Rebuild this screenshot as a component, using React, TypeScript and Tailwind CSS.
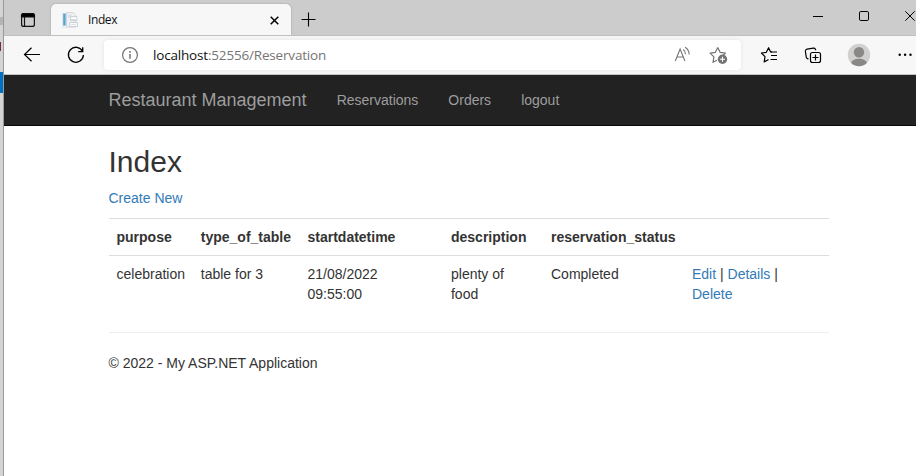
import type { ReactNode } from "react";

type IconProps = { box: string; className: string; children: ReactNode };

function Icon({ box, className, children }: IconProps) {
  return (
    <svg viewBox={box} fill="none" stroke="#111" strokeWidth="1.2" className={`shrink-0 ${className}`}>
      {children}
    </svg>
  );
}

function TabStrip() {
  return (
    <div className="flex h-9 border-b border-[#c0c0c0] bg-[#cccccc] overflow-hidden">
      <Icon box="4 0 47 36" className="h-9 w-[47px]">
        <rect x="21.6" y="13.6" width="12.8" height="12.8" rx="2" />
        <path d="M21.5 17v-1.5a2 2 0 0 1 2-2h9a2 2 0 0 1 2 2V17z" fill="#000" />
        <path d="M24.5 17v9" />
      </Icon>
      <div className="mt-1 flex h-8 w-60 shrink-0 items-center rounded-t-[5px] bg-[#f7f7f7] shadow-[0_0_2px_#999]">
        <Icon box="60 10 20 20" className="ml-[9px] h-5 w-5">
          <path d="M66.5 12.5h7l2 2V27h-9z" fill="#eef1f4" stroke="#d3d9df" strokeWidth="1" />
          <path d="M63 13.5h2.8v12H63z" fill="#5ba3cd" stroke="#a9cde3" strokeWidth=".7" />
          <path d="M62 27.2h14" stroke="#dde2e7" strokeWidth="1" />
          <path d="M68 14.5h4v3h-4z" fill="#dce2e8" stroke="none" />
          <path d="M70.5 16.5h6.500v4h-6.500zM69.5 22.500h8v4h-8z" fill="#fafafa" stroke="#c8ced4" strokeWidth=".9" />
          <path d="M71 19.500h5M71 24.500h5" stroke="#dde1e5" />
        </Icon>
        <span className="ml-2 w-[178px] font-['Open_Sans','Noto_Sans',sans-serif] text-[12px] leading-4 tracking-[-0.4px] text-[#111]">
          Index
        </span>
        <Icon box="266 12 16 16" className="h-4 w-4">
          <path d="m270.7 16.7 7.6 7.6m0-7.6-7.6 7.6" stroke="#000" strokeWidth="1.5" />
        </Icon>
      </div>
      <Icon box="291 0 40 36" className="h-9 w-10">
        <path d="M301.5 19.5h14M308.5 12.5v14" strokeWidth="1.1" stroke="#000" />
      </Icon>
      <Icon box="800 0 116 36" className="ml-auto h-9 w-[116px]">
        <path d="M813 16.5h10" stroke="#000" strokeWidth="1" />
        <rect x="859.5" y="11.5" width="9" height="9" rx="1.3" stroke="#000" strokeWidth="1" />
        <path d="m905.3 11.3 9.4 9.4m0-9.4-9.4 9.4" stroke="#000" strokeWidth="1" />
      </Icon>
    </div>
  );
}

function Toolbar() {
  return (
    <div className="flex h-[39px] items-center border-b border-[#c3c5c3] bg-[#f7f7f7]">
      <Icon box="20 43 24 24" className="ml-4 h-6 w-6">
        <path d="M40 54.5H24.5M31.5 47.7l-7 6.8 7 6.8" stroke="#000" />
      </Icon>
      <Icon box="64 43 24 24" className="ml-5 h-6 w-6">
        <path d="M82.6 51.4A7.5 7.5 0 1 0 83.4 55M82.7 47.2v4.5h-4.5" stroke="#000" strokeWidth="1.3" />
      </Icon>
      <div className="ml-4 flex h-[30px] w-[637px] shrink-0 items-center rounded bg-white shadow-[0_0_4px_#e4e4e4]">
        <Icon box="120 45 20 20" className="ml-4 h-5 w-5">
          <circle cx="130" cy="55" r="7.4" stroke="#737373" />
          <path d="M130 54v4.7M130 51v1.7" stroke="#737373" strokeWidth="1.5" />
        </Icon>
        <span className="ml-[13px] w-[519px] whitespace-nowrap font-['Open_Sans','Noto_Sans',sans-serif] text-[13.5px] leading-5 tracking-[-0.18px] text-[#757575]">
          <span className="text-[#111]">localhost</span>:52556/Reservation
        </span>
        <Icon box="672 45 20 20" className="h-5 w-5">
          <path d="m675.3 61 4.8-12 4.8 12M677 57h6.3M683.2 49.5c1.6 1.2 2.3 2.8 2.3 4.8M685.2 47.3c2.7 1.9 4 4.3 4 7.3" stroke="#757575" strokeWidth="1.1" />
        </Icon>
        <Icon box="708 45 20 20" className="ml-4 h-5 w-5">
          <path d="m717.8 47.6 2.3 4.7 5.3.8-2.2 2.2M717.8 47.6l-2.4 4.7-5.3.8 3.8 3.8-.9 5.4 3.9-2.1" stroke="#737373" strokeLinejoin="round" />
          <circle cx="722.5" cy="59.3" r="4.7" fill="#737373" stroke="none" />
          <path d="M720 59.3h5M722.5 56.8v5" stroke="#fff" strokeWidth="1.1" />
        </Icon>
      </div>
      <Icon box="759 45 20 20" className="ml-[18px] h-5 w-5">
        <path d="M771.5 51.9h-.9l-2-4.2-2.3 4.6-4.9.8 3.6 3.6-.8 5.2 4-2.1" stroke="#000" strokeLinejoin="round" strokeLinecap="round" />
        <path d="M771 52h6M771 55.500h6M770.500 59.500h6.500" stroke="#000" />
      </Icon>
      <Icon box="803 45 20 20" className="ml-6 h-5 w-5">
        <path d="m808.5 59-1-.4a2 2 0 0 1-1.2-1.3l-.9-5.8a2 2 0 0 1 1.7-2.3l6.2-1.1a2 2 0 0 1 2.1 1.1l.4 1" stroke="#000" />
        <rect x="810.5" y="52.5" width="10" height="10" rx="2" stroke="#000" />
        <path d="M812.5 57.5h6M815.5 54.5v6" stroke="#000" />
      </Icon>
      <Icon box="847 43 24 24" className="ml-6 h-6 w-6">
        <circle cx="859" cy="55" r="11.2" fill="#d2d0ce" stroke="none" />
        <circle cx="859" cy="52.2" r="5.2" fill="#8a8886" stroke="none" />
        <path d="M851.2 63c.3-2.7 3.5-4.3 7.8-4.3s7.5 1.6 7.8 4.3a11.2 11.2 0 0 1-15.6 0z" fill="#8a8886" stroke="none" />
      </Icon>
      <Icon box="896 45 18 20" className="ml-[25px] h-5 w-[18px]">
        <g fill="#000" stroke="none">
          <circle cx="899.7" cy="54.7" r="1.2" />
          <circle cx="905.1" cy="54.7" r="1.2" />
          <circle cx="910.5" cy="54.7" r="1.2" />
        </g>
      </Icon>
    </div>
  );
}

function Link({ children }: { children: ReactNode }) {
  return <a href="#" className="text-[#337ab7]">{children}</a>;
}

function ReservationPage() {
  return (
    <main className="ml-[104.5px] w-[720px] pt-[19px]">
      <h2 className="mb-[10px] text-[30px] leading-[33px]">Index</h2>
      <p className="mb-[10px]"><Link>Create New</Link></p>
      <table className="mb-5 w-full table-fixed border-separate border-spacing-0 text-left">
        <colgroup>
          <col className="w-[84.3px]" />
          <col className="w-[106.7px]" />
          <col className="w-[143.5px]" />
          <col className="w-[100px]" />
          <col className="w-[141px]" />
          <col />
        </colgroup>
        <thead>
          <tr className="*:border-t *:border-[#ddd] *:p-2 *:font-bold">
            <th>purpose</th>
            <th>type_of_table</th>
            <th>startdatetime</th>
            <th>description</th>
            <th>reservation_status</th>
            <th />
          </tr>
        </thead>
        <tbody>
          <tr className="*:border-t *:border-[#ddd] *:p-2 *:align-top">
            <td>celebration</td>
            <td>table for 3</td>
            <td>21/08/2022<br />09:55:00</td>
            <td>plenty of<br />food</td>
            <td>Completed</td>
            <td><Link>Edit</Link> | <Link>Details</Link> |<br /><Link>Delete</Link></td>
          </tr>
        </tbody>
      </table>
      <hr className="mb-5 border-t border-[#eee]" />
      <footer>© 2022 - My ASP.NET Application</footer>
    </main>
  );
}

export default function App() {
  return (
    <div className="flex h-[476px] w-[916px] overflow-hidden bg-white">
      <div className="flex w-1 shrink-0 flex-col border-r border-[#999] bg-[#d4d4d4]">
        <div className="h-[17px]" />
        <div className="h-2 bg-[#b5b5b5]" />
        <div className="h-[17px]" />
        <div className="h-[9px] border-l border-[#7b2946]" />
        <div className="h-[21px]" />
        <div className="h-[21px] bg-[#0072c6]" />
      </div>
      <div className="w-[912px] font-['Liberation_Sans',Arial,sans-serif] text-[14px] leading-5 text-[#333]">
        <TabStrip />
        <Toolbar />
        <nav className="flex h-[51px] items-start border-b border-[#080808] bg-[#222] pl-[104.5px] pt-[15px] text-[#9d9d9d]">
          <span className="mr-[30px] text-[18px]">Restaurant Management</span>
          <span className="mr-[30px]">Reservations</span>
          <span className="mr-[30px]">Orders</span>
          <span>logout</span>
        </nav>
        <ReservationPage />
      </div>
    </div>
  );
}
